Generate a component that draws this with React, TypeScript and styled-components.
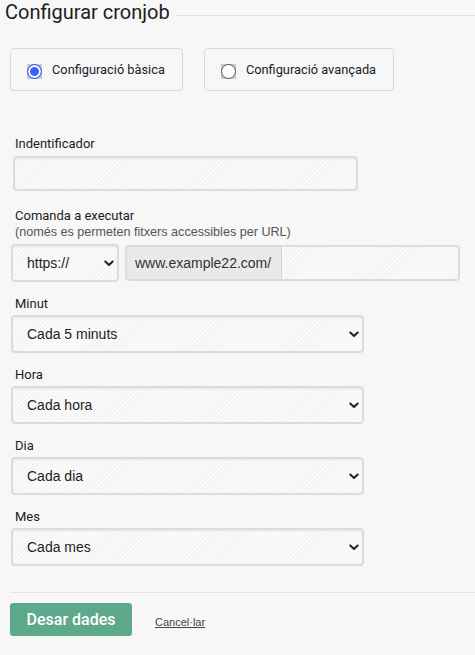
import React, { useState } from "react";
import styled, { createGlobalStyle } from "styled-components";

const GlobalStyle = createGlobalStyle`
  html, body {
    margin: 0;
    padding: 0;
    background: #f7f7f7;
  }
  body {
    font-family: Roboto, "Liberation Sans", Arial, sans-serif;
    color: #222;
  }
`;

const stripes = `repeating-linear-gradient(135deg, #f2f2f2 0px, #f2f2f2 1px, #fafafa 1px, #fafafa 3.5px)`;

type Option = { value: string; label: string };

const minuteOptions: Option[] = [
  { value: "1", label: "Cada minut" },
  { value: "5", label: "Cada 5 minuts" },
  { value: "15", label: "Cada 15 minuts" },
  { value: "30", label: "Cada 30 minuts" },
];
const hourOptions: Option[] = [{ value: "*", label: "Cada hora" }];
const dayOptions: Option[] = [{ value: "*", label: "Cada dia" }];
const monthOptions: Option[] = [{ value: "*", label: "Cada mes" }];

const Chevron = () => (
  <ChevronIcon width="10" height="7" viewBox="0 0 10 7">
    <path d="M1.3 1.5 L5 5 L8.7 1.5" fill="none" stroke="#222" strokeWidth="2" strokeLinecap="round" strokeLinejoin="round" />
  </ChevronIcon>
);

const SelectBox = ({ options, value, width }: { options: Option[]; value: string; width: number }) => (
  <SelectWrap $width={width}>
    <Select defaultValue={value}>
      {options.map((o) => (
        <option key={o.value} value={o.value}>
          {o.label}
        </option>
      ))}
    </Select>
    <Chevron />
  </SelectWrap>
);

const App = () => {
  const [mode, setMode] = useState<"basic" | "advanced">("basic");

  return (
    <Page>
      <GlobalStyle />
      <Header>
        <Title>Configurar cronjob</Title>
        <Rule />
      </Header>

      <Content>
        <ModeRow>
          <ModeOption onClick={() => setMode("basic")}>
            <Radio $checked={mode === "basic"} />
            Configuració bàsica
          </ModeOption>
          <ModeOption onClick={() => setMode("advanced")}>
            <Radio $checked={mode === "advanced"} />
            Configuració avançada
          </ModeOption>
        </ModeRow>

        <Form>
          <Field $gap={17}>
            <Label $mb={4}>Indentificador</Label>
            <TextInput type="text" />
          </Field>

          <Field $gap={14}>
            <Label $mb={0}>Comanda a executar</Label>
            <Hint>(només es permeten fitxers accessibles per URL)</Hint>
            <UrlRow>
              <SelectBox options={[{ value: "https", label: "https://" }, { value: "http", label: "http://" }]} value="https" width={108} />
              <UrlGroup>
                <Addon>www.example22.com/</Addon>
                <UrlInput type="text" />
              </UrlGroup>
            </UrlRow>
          </Field>

          <Field $gap={14}>
            <Label $mb={3}>Minut</Label>
            <SelectBox options={minuteOptions} value="5" width={353} />
          </Field>
          <Field $gap={14}>
            <Label $mb={3}>Hora</Label>
            <SelectBox options={hourOptions} value="*" width={353} />
          </Field>
          <Field $gap={14}>
            <Label $mb={3}>Dia</Label>
            <SelectBox options={dayOptions} value="*" width={353} />
          </Field>
          <Field $gap={0}>
            <Label $mb={3}>Mes</Label>
            <SelectBox options={monthOptions} value="*" width={353} />
          </Field>
        </Form>

        <Footer>
          <SaveButton type="button">Desar dades</SaveButton>
          <CancelLink href="#">Cancel·lar</CancelLink>
        </Footer>
      </Content>
    </Page>
  );
};

export default App;

const Page = styled.div`
  width: 475px;
  min-height: 655px;
  overflow: hidden;
`;

const Header = styled.div`
  display: flex;
  align-items: flex-start;
  gap: 6px;
  padding-left: 5px;
`;

const Title = styled.h1`
  margin: 0;
  font-family: Roboto, sans-serif;
  font-size: 20px;
  font-weight: 400;
  line-height: 24px;
  color: #1c1c1c;
  white-space: nowrap;
`;

const Rule = styled.div`
  flex: 1;
  margin-top: 15px;
  border-top: 1px solid #e2e2e2;
`;

const Content = styled.div`
  padding-left: 10px;
`;

const ModeRow = styled.div`
  display: flex;
  gap: 21px;
  margin-top: 24px;
`;

const ModeOption = styled.label`
  display: flex;
  align-items: center;
  gap: 10px;
  height: 43px;
  box-sizing: border-box;
  padding: 0 17px 0 16px;
  border: 1px solid #d9d9d9;
  border-radius: 4px;
  font-family: Roboto, sans-serif;
  font-size: 12.8px;
  color: #1c1c1c;
  cursor: pointer;
`;

const Radio = styled.span<{ $checked: boolean }>`
  position: relative;
  width: 15px;
  height: 15px;
  margin-top: 3px;
  background: #c9c9c9;
  flex-shrink: 0;

  &::after {
    content: "";
    position: absolute;
    inset: 0;
    border-radius: 50%;
    box-sizing: border-box;
    border: ${(p) => (p.$checked ? "1.5px solid #3d64f5" : "1px solid #555")};
    background: ${(p) => (p.$checked ? "#3d64f5" : "#fff")};
    box-shadow: ${(p) => (p.$checked ? "inset 0 0 0 2px #fff" : "none")};
  }
`;

const Form = styled.div`
  display: flex;
  flex-direction: column;
  margin-top: 45px;
`;

const Field = styled.div<{ $gap: number }>`
  display: flex;
  flex-direction: column;
  align-items: flex-start;
  margin-bottom: ${(p) => p.$gap}px;
`;

const Label = styled.div<{ $mb: number }>`
  padding-left: 5px;
  margin-bottom: ${(p) => p.$mb}px;
  font-family: Roboto, sans-serif;
  font-size: 13px;
  line-height: 16px;
  color: #1c1c1c;
`;

const Hint = styled.div`
  padding-left: 5px;
  margin-bottom: 4px;
  font-family: "Liberation Sans", Arial, sans-serif;
  font-size: 12.6px;
  line-height: 16px;
  color: #555;
`;

const fieldBox = `
  box-sizing: border-box;
  border: 2px solid #dcdcdc;
  border-radius: 4px;
  background: ${stripes};
  box-shadow: inset 0 1px 2px rgba(0, 0, 0, 0.07);
  font-family: "Liberation Sans", Arial, sans-serif;
  font-size: 14px;
  color: #222;
  outline: none;
`;

const TextInput = styled.input`
  ${fieldBox}
  width: 345px;
  height: 35px;
  margin-left: 3px;
`;

const SelectWrap = styled.div<{ $width: number }>`
  position: relative;
  width: ${(p) => p.$width}px;
  margin-left: 1px;
`;

const Select = styled.select`
  ${fieldBox}
  appearance: none;
  -webkit-appearance: none;
  display: block;
  width: 100%;
  height: 38px;
  padding: 0 22px 0 14px;
`;

const ChevronIcon = styled.svg`
  position: absolute;
  right: 5px;
  top: 16px;
  pointer-events: none;
`;

const UrlRow = styled.div`
  display: flex;
  align-items: center;
  gap: 6px;
`;

const UrlGroup = styled.div`
  display: flex;
  width: 335px;
  height: 36px;
  box-sizing: border-box;
  border: 2px solid #dcdcdc;
  border-radius: 4px;
  overflow: hidden;
`;

const Addon = styled.span`
  display: flex;
  align-items: center;
  padding: 0 10px 0 8px;
  background: #e9e9e9;
  border-right: 1px solid #d6d6d6;
  font-family: "Liberation Sans", Arial, sans-serif;
  font-size: 14px;
  color: #333;
  white-space: nowrap;
`;

const UrlInput = styled.input`
  flex: 1;
  min-width: 0;
  border: none;
  background: ${stripes};
  outline: none;
  font-family: "Liberation Sans", Arial, sans-serif;
  font-size: 14px;
`;

const Footer = styled.div`
  display: flex;
  align-items: center;
  gap: 23px;
  margin-top: 26px;
  padding-top: 10px;
  border-top: 1px solid #e3e3e3;
`;

const SaveButton = styled.button`
  width: 122px;
  height: 33px;
  border: none;
  border-radius: 3px;
  background: #5ea98c;
  color: #fff;
  font-family: Roboto, sans-serif;
  font-size: 16px;
  font-weight: 500;
  cursor: pointer;
`;

const CancelLink = styled.a`
  margin-top: 4px;
  font-family: "Liberation Sans", Arial, sans-serif;
  font-size: 11px;
  color: #444;
  text-decoration: underline;
`;
